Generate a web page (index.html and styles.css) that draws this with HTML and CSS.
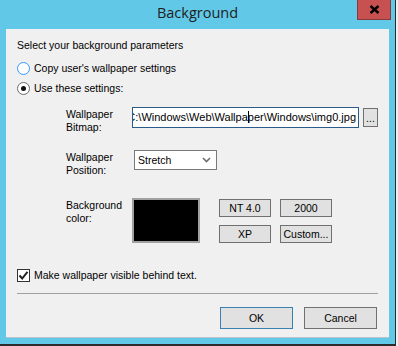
FILE: index.html
```html
<!DOCTYPE html>
<html lang="en">
<head>
  <meta charset="UTF-8">
  <title>Background</title>
  <link rel="stylesheet" href="styles.css">
</head>
<body>
  <div class="window">
    <div class="titlebar">
      <span class="title">Background</span>
      <button class="btn-close" type="button">
        <svg width="11" height="9" viewBox="0 0 11 9"><path d="M1.5 1 L9.5 8 M9.5 1 L1.5 8" stroke="#000" stroke-width="2.4" fill="none"/></svg>
      </button>
    </div>
    <div class="client">
      <p class="intro">Select your background parameters</p>
      <label class="opt"><span class="radio radio-hot"></span>Copy user's wallpaper settings</label>
      <label class="opt"><span class="radio radio-on"></span>Use these settings:</label>

      <div class="settings">
        <div class="field">
          <div class="field-label">Wallpaper<br>Bitmap:</div>
          <div class="path-box">
            <div class="path-input"><span>C:\Windows\Web\Wallpa<i class="caret"></i>per\Windows\img0.jpg</span></div>
            <button class="btn btn-browse" type="button">...</button>
          </div>
        </div>
        <div class="field">
          <div class="field-label">Wallpaper<br>Position:</div>
          <div class="dropdown">
            <span>Stretch</span>
            <svg width="9" height="6" viewBox="0 0 9 6"><path d="M1 1 L4.5 4.5 L8 1" stroke="#6d6d6d" stroke-width="1.6" fill="none"/></svg>
          </div>
        </div>
        <div class="field field-color">
          <div class="field-label">Background<br>color:</div>
          <div class="swatch"></div>
          <div class="presets">
            <button class="btn" type="button">NT 4.0</button>
            <button class="btn" type="button">2000</button>
            <button class="btn" type="button">XP</button>
            <button class="btn" type="button">Custom...</button>
          </div>
        </div>
      </div>

      <label class="opt opt-check">
        <span class="checkbox">
          <svg width="11" height="11" viewBox="0 0 11 11"><path d="M1.5 5.5 L4.2 8.5 L9.5 1.8" stroke="#222" stroke-width="2" fill="none"/></svg>
        </span>Make wallpaper visible behind text.
      </label>

      <div class="separator"></div>

      <div class="actions">
        <button class="btn btn-action btn-default" type="button">OK</button>
        <button class="btn btn-action" type="button">Cancel</button>
      </div>
    </div>
  </div>
</body>
</html>
```

FILE: styles.css
```css
* {
  margin: 0;
  padding: 0;
  box-sizing: border-box;
}
body {
  background: #f0f0f0;
  font-family: "Liberation Sans", Arial, sans-serif;
  font-size: 10.5px;
  line-height: 13px;
  color: #000000;
}
.window {
  width: 396px;
  height: 346px;
  background: #62c8e8;
  border-right: 1px solid #2b2b2b;
  border-bottom: 2px solid #2b2b2b;
}
.titlebar {
  position: relative;
  height: 29px;
  display: flex;
  justify-content: center;
}
.titlebar .title {
  font-family: "Open Sans", sans-serif;
  font-size: 14.5px;
  line-height: 26px;
  color: #1e1e1e;
}
.btn-close {
  position: absolute;
  top: 0;
  left: 357px;
  width: 34px;
  height: 20px;
  background: #c75050;
  border: 1px solid #8a3a3a;
  border-top: 0;
  display: flex;
  align-items: center;
  justify-content: center;
}
.client {
  width: 383px;
  height: 308px;
  margin-left: 6px;
  padding: 10px 11px 0 11px;
  background: #f0f0f0;
  box-shadow: 0 1px 0 #b8c6cc;
}
.intro {
  margin-bottom: 6px;
}
.opt {
  display: flex;
  align-items: center;
  height: 20px;
}
.radio {
  position: relative;
  width: 13px;
  height: 13px;
  margin-right: 4px;
  border: 1px solid #6a6a6a;
  border-radius: 50%;
  background: #ffffff;
}
.radio-hot {
  border-color: #3399ff;
}
.radio-on::after {
  content: "";
  position: absolute;
  top: 3px;
  left: 3px;
  width: 5px;
  height: 5px;
  border-radius: 50%;
  background: #111111;
}
.settings {
  margin-top: 9px;
  padding-left: 49px;
}
.field {
  display: flex;
  align-items: flex-start;
}
.field + .field {
  margin-top: 16px;
}
.field.field-color {
  margin-top: 21px;
}
.field-label {
  width: 66px;
  padding-top: 1px;
}
.path-box {
  display: flex;
  align-items: center;
  gap: 4px;
}
.path-input {
  width: 227px;
  height: 21px;
  border: 1px solid #2a5b8a;
  background: #ffffff;
  display: flex;
  justify-content: flex-end;
  align-items: center;
  overflow: hidden;
  white-space: nowrap;
  padding-right: 2px;
  font-size: 11px;
}
.caret {
  display: inline-block;
  width: 0;
  height: 12px;
  border-left: 1px solid #000000;
  margin-right: -1px;
  vertical-align: -2px;
}
.btn {
  font-family: "Liberation Sans", Arial, sans-serif;
  font-size: 10.5px;
  color: #000000;
  background: #e1e1e1;
  border: 1px solid #707070;
}
.btn-browse {
  width: 15px;
  height: 19px;
  line-height: 10px;
}
.dropdown {
  margin-left: 2px;
  width: 83px;
  height: 20px;
  border: 1px solid #7a7a7a;
  background: #ffffff;
  display: flex;
  align-items: center;
  justify-content: space-between;
  padding: 0 5px 0 3px;
}
.swatch {
  width: 68px;
  height: 45px;
  border: 2px solid #a0a0a0;
  background: #000000;
  flex-shrink: 0;
}
.presets {
  margin: 1px 0 0 19px;
  display: grid;
  grid-template-columns: 52px 52px;
  grid-auto-rows: 18px;
  column-gap: 9px;
  row-gap: 8px;
}
.opt-check {
  margin-top: 22px;
}
.checkbox {
  width: 13px;
  height: 13px;
  margin-right: 4px;
  border: 1px solid #333333;
  background: #ffffff;
  display: flex;
  align-items: center;
  justify-content: center;
}
.separator {
  margin-top: 8px;
  height: 1px;
  background: #a0a0a0;
}
.actions {
  margin-top: 13px;
  display: flex;
  justify-content: flex-end;
  gap: 11px;
  padding-right: 1px;
}
.btn-action {
  width: 73px;
  height: 22px;
}
.btn-default {
  border-color: #3c7fb1;
}
```
